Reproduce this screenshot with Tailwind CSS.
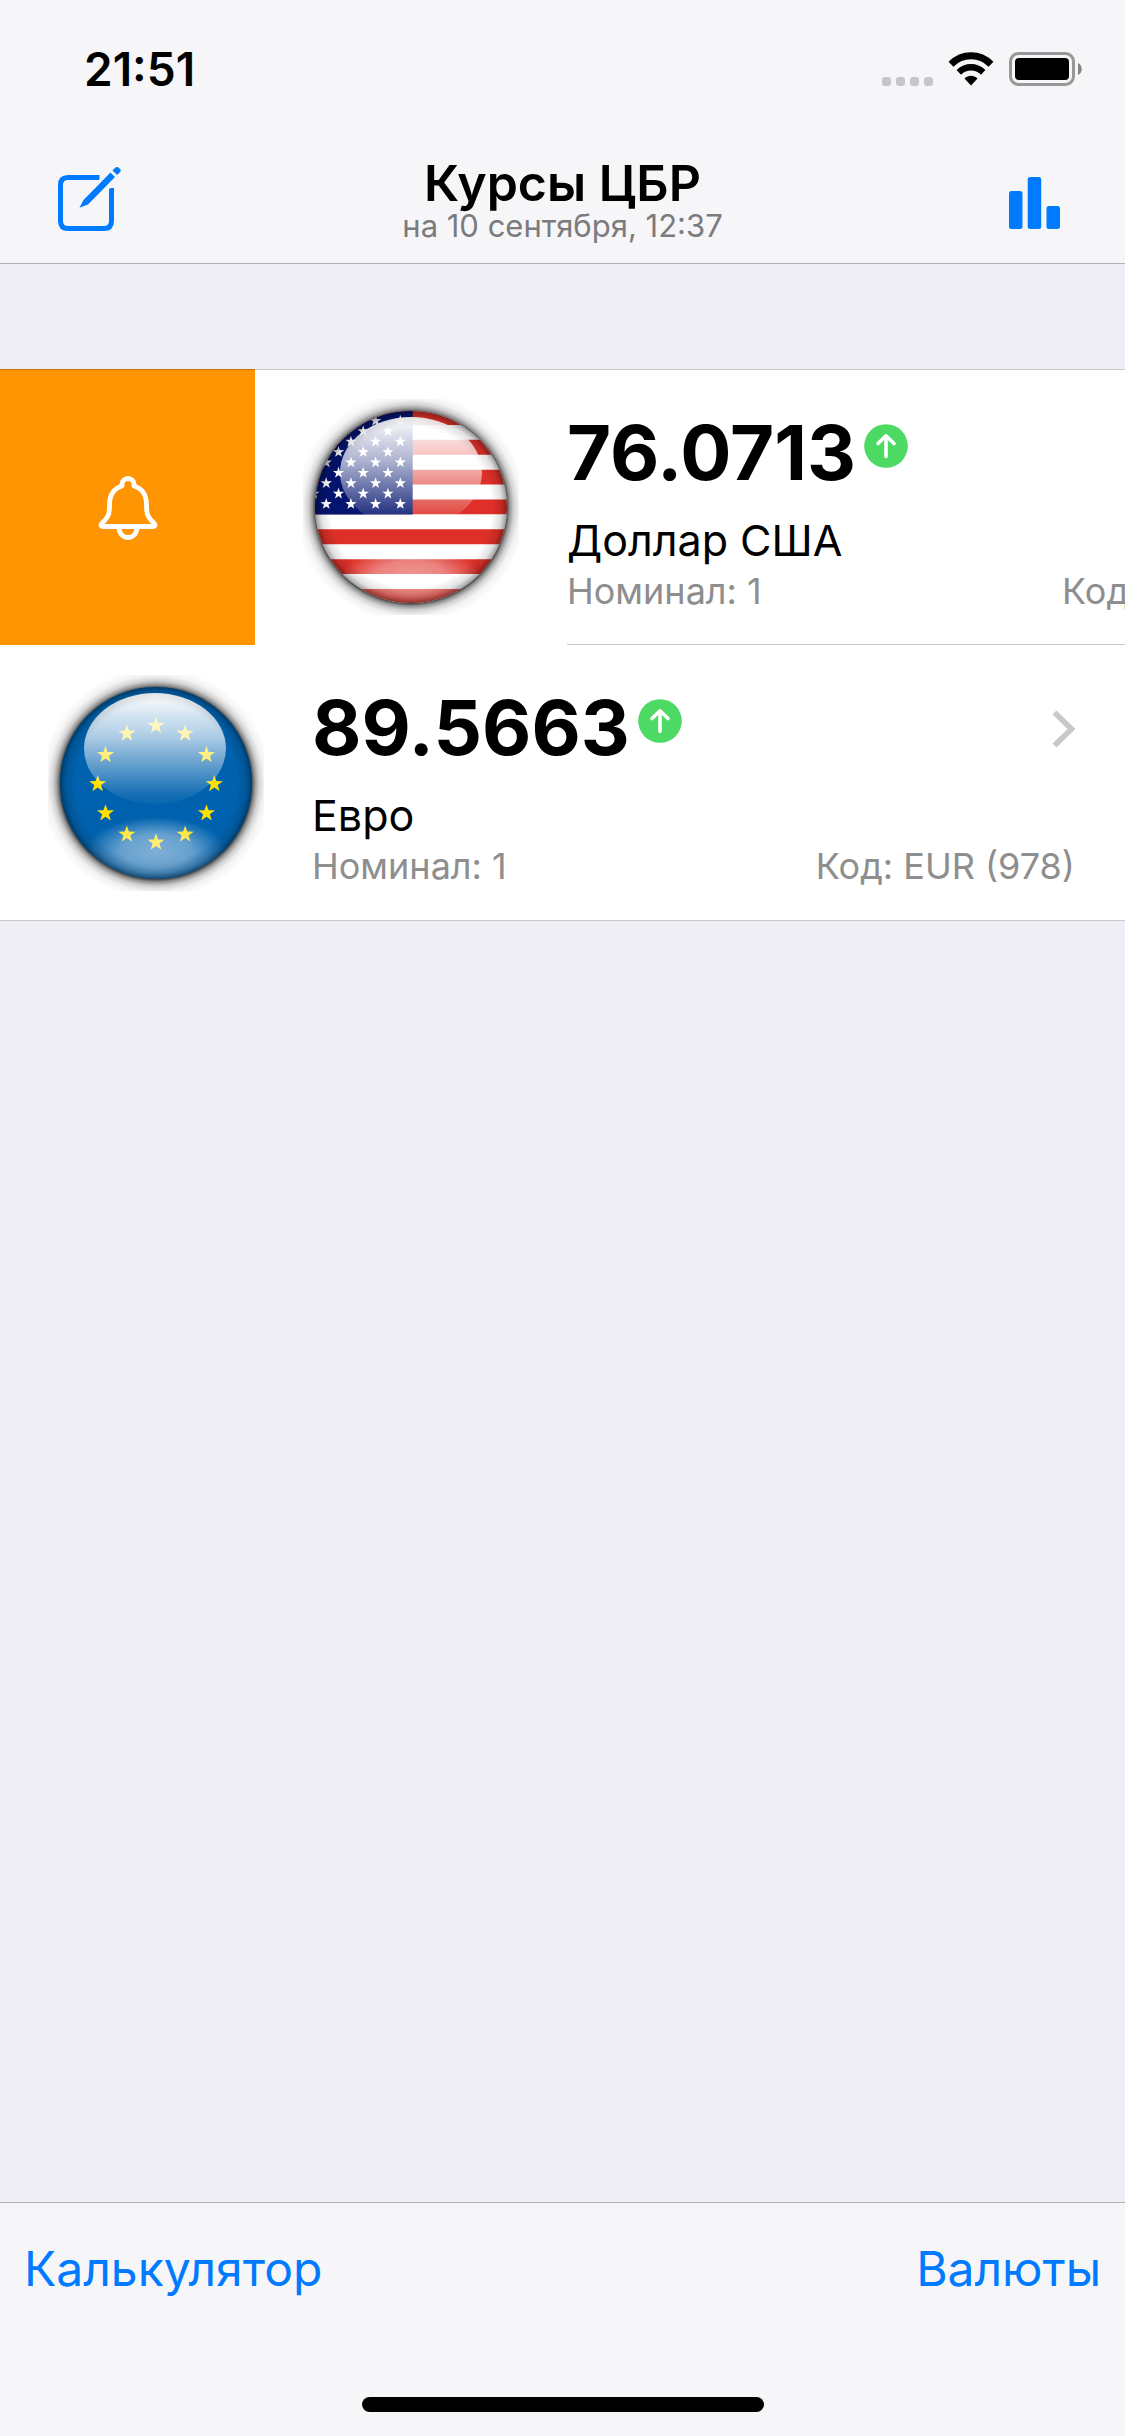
<!DOCTYPE html>
<html lang="ru">
<head>
<meta charset="utf-8">
<meta name="viewport" content="width=device-width, initial-scale=1">
<title>Курсы ЦБР</title>
<script src="https://cdn.jsdelivr.net/npm/@tailwindcss/browser@4"></script>
</head>
<body class="bg-[#efeef4] text-black font-['Inter','Roboto',sans-serif]">
<svg class="hidden" aria-hidden="true">
  <defs>
    <path id="star" d="M0-9 2.1-2.9 8.6-2.8 3.4 1.1 5.3 7.3 0 3.6-5.3 7.3-3.4 1.1-8.6-2.8-2.1-2.9Z"/>
  </defs>
</svg>
<div class="flex min-h-screen flex-col overflow-hidden">

  <header class="border-b border-[#b2b2b4] bg-[#f6f6f8]">
    <div class="flex h-[132px] items-start justify-between pt-[42px] pr-[42px] pl-[84px]">
      <time class="text-[46px] leading-[54px] font-semibold">21:51</time>
      <div class="flex items-center gap-[15px] pt-2.5">
        <div class="flex gap-[5px] pt-6">
          <i class="size-[9px] rounded-[3px] bg-[#c6c6c8]"></i>
          <i class="size-[9px] rounded-[3px] bg-[#c6c6c8]"></i>
          <i class="size-[9px] rounded-[3px] bg-[#c6c6c8]"></i>
          <i class="size-[9px] rounded-[3px] bg-[#c6c6c8]"></i>
        </div>
        <svg class="h-[34px] w-[46px]" viewBox="0 0 46 34" fill="none" stroke="#000">
          <path stroke-width="7" d="M3 12.2C14.500 1 31.500 1 43 12.200"/>
          <path stroke-width="6.500" d="M10.800 20.300C18 13.700 28 13.700 35.200 20.300"/>
          <path fill="#000" stroke="none" d="M16.500 26.600C20.200 22.900 25.800 22.900 29.500 26.600L23 33.400Z"/>
        </svg>
        <svg class="h-[34px] w-[74px]" viewBox="0 0 74 34">
          <rect x="1.500" y="1.500" width="63" height="31" rx="8" fill="none" stroke="#98989a" stroke-width="3"/>
          <rect x="6" y="6" width="54" height="22" rx="4"/>
          <path fill="#858587" d="M69 11C74 13 74 21 69 23Z"/>
        </svg>
      </div>
    </div>
    <div class="grid grid-cols-[1fr_auto_1fr] items-start pt-6 pb-[21px]">
      <button class="ml-[57px] mt-2.5 justify-self-start" aria-label="Изменить">
        <svg class="h-[68px] w-[66px]" viewBox="0 0 66 68" fill="none" stroke="#007aff">
          <path stroke-width="5" d="M42.500 11.500H11Q3.500 11.500 3.500 19V55Q3.500 62.500 11 62.500H47Q54.500 62.500 54.500 55V22"/>
          <path stroke="#f6f6f8" stroke-width="14" d="M34 32 62 3"/>
          <path fill="#007aff" stroke="none" d="M22.500 41.800 26.500 34 53.500 6.600 58 11 31 38.500Z"/>
          <path fill="#007aff" stroke="none" d="M55.500 4.600 58.500 1.600Q60 .6 61.500 1.600L63.200 3.300Q64.300 4.600 63.200 6L60.100 9.100Z"/>
        </svg>
      </button>
      <div class="text-center">
        <h1 class="text-[50px] leading-[54px] font-semibold">Курсы ЦБР</h1>
        <p class="text-[31px] leading-8 text-[#7b7b7d]">на 10 сентября, 12:37</p>
      </div>
      <button class="mr-[65px] mt-[21px] justify-self-end" aria-label="Графики">
        <svg class="h-[52px] w-[51px]" viewBox="0 0 51 52" fill="#007aff">
          <rect y="14" width="13.500" height="38" rx="2.500"/>
          <rect x="18.700" width="13.500" height="52" rx="2.500"/>
          <rect x="37.500" y="29" width="13.500" height="23" rx="2.500"/>
        </svg>
      </button>
    </div>
  </header>

  <main class="flex-1 pt-[105px]">
    <ul class="border-b border-[#c8c7cc] bg-white">
      <li class="flex h-[276px] overflow-hidden">
        <button class="flex w-[255px] shrink-0 items-center justify-center border-t border-[#cc7a09] bg-[#ff9502]" aria-label="Уведомление">
          <svg class="h-[66px] w-[60px]" viewBox="0 0 60 66" fill="none" stroke="#fff" stroke-width="4.800" stroke-linejoin="round">
            <path d="M24 11C22.500 1 37.500 1 36 11C46 14 48.500 22 48.500 30C48.500 39 49.500 41 53 45C56 48 57.500 49 57 50.500Q56.500 51.500 55 51.500H5Q3.500 51.500 3 50.500C2.500 49 4 48 7 45C10.500 41 11.500 39 11.500 30C11.500 22 14 14 24 11Z"/>
            <path d="M21 52C21 66 39 66 39 52"/>
          </svg>
        </button>
        <a href="#usd" class="flex w-full shrink-0 gap-12 border-t border-[#c8c7cc] pl-12">
          <svg class="mt-[29px] size-[216px] shrink-0" viewBox="0 0 216 216" role="img" aria-label="Флаг США">
            <defs>
              <radialGradient id="shadow" gradientUnits="userSpaceOnUse" cx="108" cy="108.500" r="116">
                <stop offset=".82" stop-color="#000" stop-opacity=".8"/>
                <stop offset=".85" stop-color="#000" stop-opacity=".42"/>
                <stop offset=".885" stop-color="#000" stop-opacity=".18"/>
                <stop offset=".93" stop-color="#000" stop-opacity=".05"/>
                <stop offset="1" stop-color="#000" stop-opacity="0"/>
              </radialGradient>
              <radialGradient id="edge" gradientUnits="userSpaceOnUse" cx="108" cy="108" r="96">
                <stop offset=".84" stop-color="#000" stop-opacity="0"/>
                <stop offset=".94" stop-color="#000" stop-opacity=".12"/>
                <stop offset="1" stop-color="#000" stop-opacity=".38"/>
              </radialGradient>
              <linearGradient id="gloss" x1="0" y1="0" x2="0" y2="1">
                <stop offset="0" stop-color="#fff"/>
                <stop offset=".4" stop-color="#fff" stop-opacity=".67"/>
                <stop offset=".92" stop-color="#fff" stop-opacity=".08"/>
                <stop offset="1" stop-color="#fff" stop-opacity=".03"/>
              </linearGradient>
              <radialGradient id="glow">
                <stop offset="0" stop-color="#fff" stop-opacity=".5"/>
                <stop offset=".5" stop-color="#fff" stop-opacity=".4"/>
                <stop offset="1" stop-color="#fff" stop-opacity="0"/>
              </radialGradient>
              <clipPath id="disc"><circle cx="108" cy="108" r="96"/></clipPath>
            </defs>
            <rect width="216" height="216" fill="url(#shadow)"/>
            <g clip-path="url(#disc)">
              <rect width="216" height="216" fill="#fff"/>
              <path stroke="#de3028" stroke-width="14.900" d="M0 18.500H216M0 48.300H216M0 78.100H216M0 107.900H216M0 137.800H216M0 167.600H216M0 197.500H216"/>
              <path fill="#04146f" d="M0 0H109.700V115.400H0Z"/>
              <g id="us-stars" fill="#fff"></g>
              <ellipse cx="108" cy="178" rx="70" ry="32" fill="url(#glow)"/>
              <ellipse cx="108" cy="73.500" rx="71" ry="55.500" fill="url(#gloss)"/>
              <rect width="216" height="216" fill="url(#edge)"/>
            </g>
          </svg>
          <div class="flex-1 border-b border-[#c8c7cc] pt-9 pr-[50px]">
            <div class="flex items-start gap-2">
              <strong class="text-[76px] leading-[92px] font-bold">76.0713</strong>
              <svg class="mt-[18px] size-11" viewBox="0 0 44 44" fill="none" role="img" aria-label="Рост">
                <circle cx="22" cy="22" r="21.800" fill="#4cd964"/>
                <path stroke="#fff" stroke-width="3.600" stroke-linecap="round" stroke-linejoin="round" d="M22 32.500V12M14 19.500 22 11.800 30 19.500"/>
              </svg>
            </div>
            <p class="mt-3 text-[43px] leading-[60px]">Доллар США</p>
            <div class="flex justify-between text-[36px] leading-[42px] text-[#8e8e8e]">
              <span>Номинал: 1</span><span>Код: USD (840)</span>
            </div>
          </div>
        </a>
      </li>
      <li>
        <a href="#eur" class="flex h-[275px] gap-12 pl-12">
          <svg class="mt-[30px] size-[216px] shrink-0" viewBox="0 0 216 216" role="img" aria-label="Флаг Евросоюза">
            <rect width="216" height="216" fill="url(#shadow)"/>
            <g clip-path="url(#disc)">
              <rect width="216" height="216" fill="#0062ae"/>
              <g id="eu-stars" fill="#ffdf00"></g>
              <ellipse cx="108" cy="176" rx="70" ry="34" fill="url(#glow)"/>
              <ellipse cx="107" cy="73.500" rx="71" ry="55.500" fill="url(#gloss)"/>
              <rect width="216" height="216" fill="url(#edge)"/>
            </g>
          </svg>
          <div class="flex-1 pt-9 pr-[50px]">
            <div class="flex items-start gap-2">
              <strong class="text-[76px] leading-[92px] font-bold">89.5663</strong>
              <svg class="mt-[18px] size-11" viewBox="0 0 44 44" fill="none" role="img" aria-label="Рост">
                <circle cx="22" cy="22" r="21.800" fill="#4cd964"/>
                <path stroke="#fff" stroke-width="3.600" stroke-linecap="round" stroke-linejoin="round" d="M22 32.500V12M14 19.500 22 11.800 30 19.500"/>
              </svg>
              <svg class="mt-7 ml-auto h-10 w-6" viewBox="0 0 24 40" fill="none" stroke="#c7c7cc" stroke-width="5.500">
                <path d="M3.500 3.500 20.500 20 3.500 36.500"/>
              </svg>
            </div>
            <p class="mt-3 text-[43px] leading-[60px]">Евро</p>
            <div class="flex justify-between text-[36px] leading-[42px] text-[#8e8e8e]">
              <span>Номинал: 1</span><span>Код: EUR (978)</span>
            </div>
          </div>
        </a>
      </li>
    </ul>
  </main>

  <footer class="border-t border-[#b2b2b4] bg-[#f6f6f8] pb-6">
    <nav class="flex justify-between px-6 pt-9 text-[48px] leading-[60px] text-[#007aff]">
      <a href="#calculator">Калькулятор</a>
      <a href="#currencies">Валюты</a>
    </nav>
    <div class="mx-auto mt-[98px] h-[15px] w-[402px] rounded-full bg-black"></div>
  </footer>
</div>
<script>
  const put = (id, points, scale) => {
    const group = document.getElementById(id);
    for (const [x, y] of points) {
      const use = document.createElementNS('http://www.w3.org/2000/svg', 'use');
      use.setAttribute('href', '#star');
      use.setAttribute('transform', `translate(${x} ${y}) scale(${scale})`);
      group.append(use);
    }
  };
  const us = [];
  for (let row = 0; row < 9; row++)
    for (let col = 0; col < 4; col++)
      us.push([97.3 - (row % 2 ? 12.4 : 0) - col * 24.7, 105 - row * 10.4]);
  put('us-stars', us, 0.66);
  const eu = [];
  for (let i = 0; i < 12; i++)
    eu.push([108 + 58.3 * Math.sin(i * Math.PI / 6), 109 - 58.3 * Math.cos(i * Math.PI / 6)]);
  put('eu-stars', eu, 1);
</script>
</body>
</html>
